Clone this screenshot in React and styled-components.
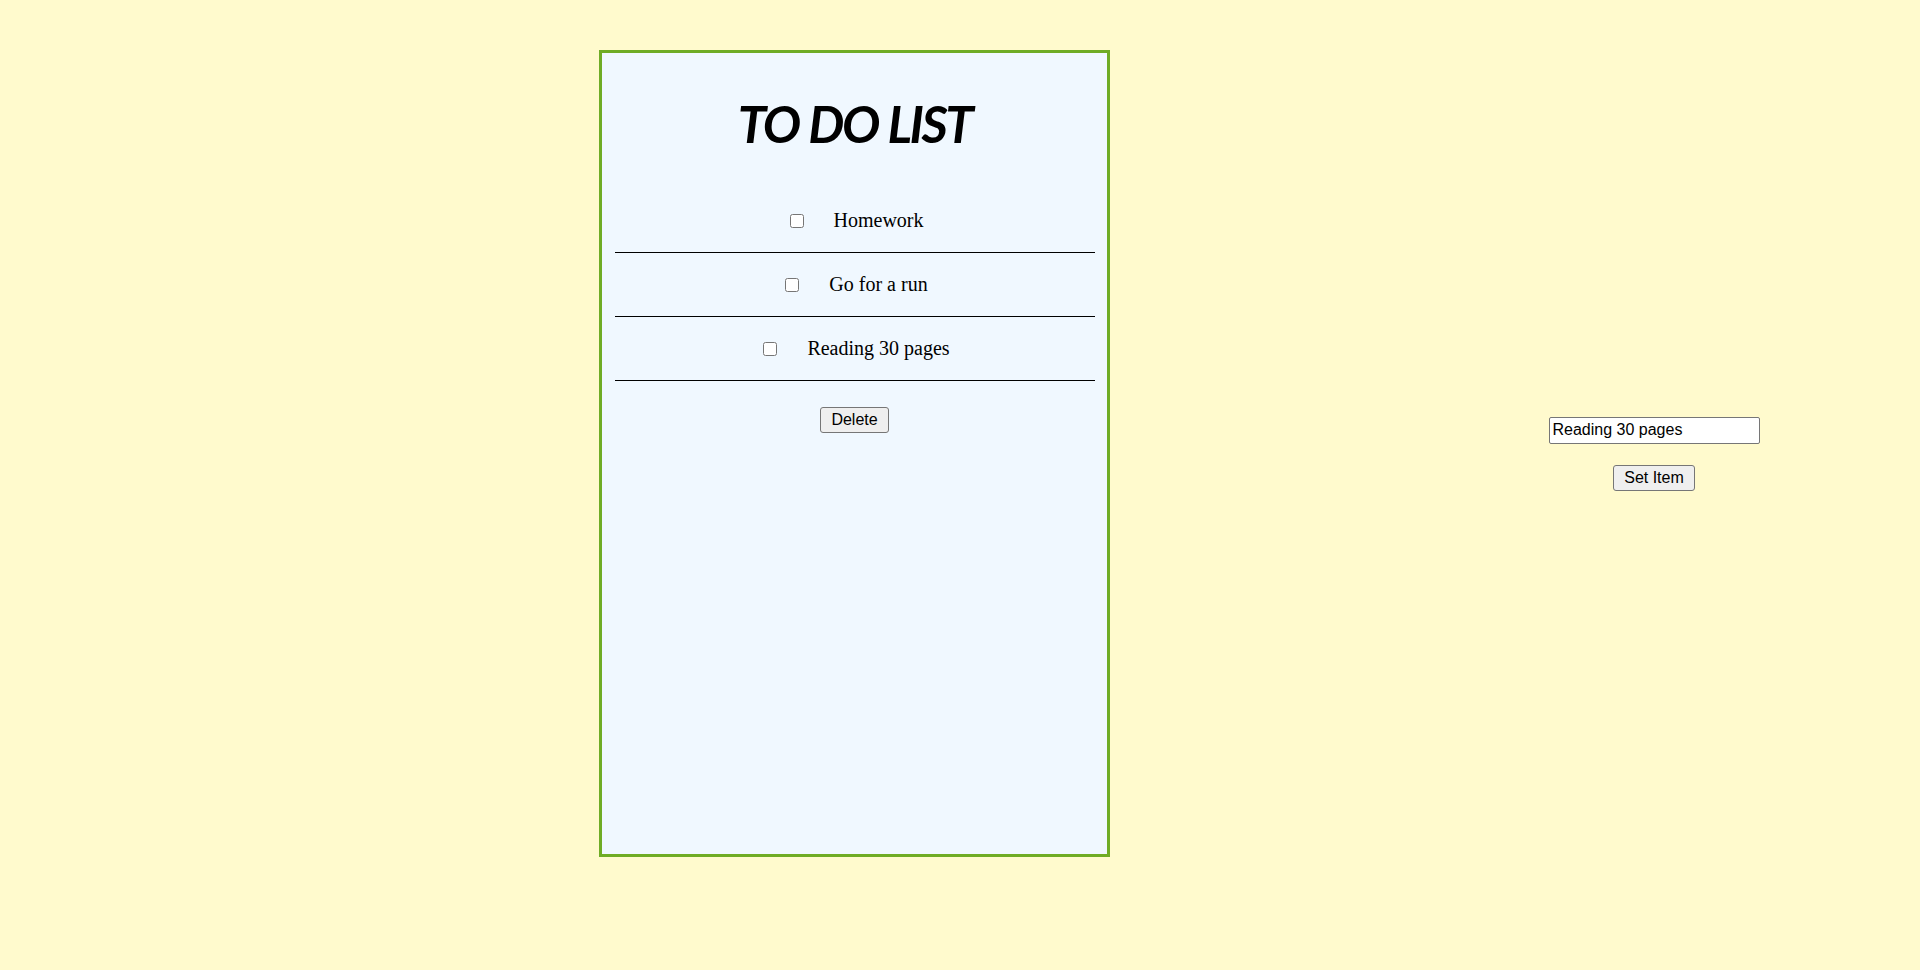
import React, { useState } from 'react';
import styled, { createGlobalStyle } from 'styled-components';

const GlobalStyle = createGlobalStyle`
  body {
    margin: 8px;
    background: #fffacd;
    font-family: "Liberation Serif", "Times New Roman", serif;
  }
`;

const Page = styled.div`
  display: flex;
  align-items: center;
  padding: 42px 0 0 591px;
`;

const Card = styled.div`
  box-sizing: border-box;
  width: 511px;
  height: 807px;
  border: 3px solid #6fac25;
  background: #f0f8ff;
  display: flex;
  flex-direction: column;
  align-items: center;
`;

const Title = styled.h1`
  margin: 39px 0 33px;
  font-family: Lato, "Open Sans", sans-serif;
  font-style: italic;
  font-weight: 700;
  font-size: 51px;
  line-height: 64px;
  letter-spacing: -2.5px;
  word-spacing: 1px;
  color: #000;
`;

const List = styled.ul`
  list-style: none;
  margin: 0;
  padding: 0;
  width: 480px;
`;

const Row = styled.li`
  display: flex;
  justify-content: center;
  align-items: center;
  gap: 27px;
  padding: 20px 0;
  line-height: 23px;
  font-size: 20px;
  border-bottom: 1px solid #000;
`;

const Check = styled.input`
  width: 14px;
  height: 14px;
  margin: 3px 3px 3px 4px;
`;

const Button = styled.button`
  font-family: "Liberation Sans", Arial, sans-serif;
  font-size: 16px;
  line-height: 18px;
  padding: 3px 10px;
  margin-top: ${(p) => p.$top || 0}px;
  border: 1px solid #767676;
  border-radius: 3px;
  background: #efefef;
  color: #000;
`;

const Form = styled.div`
  margin-left: 394px;
  width: 300px;
  display: flex;
  flex-direction: column;
  align-items: center;
`;

const TextInput = styled.input`
  box-sizing: border-box;
  width: 211px;
  height: 27px;
  padding: 3px 3px;
  border: 1px solid #767676;
  border-radius: 2px;
  font-family: "Liberation Sans", Arial, sans-serif;
  font-size: 16px;
  color: #000;
  background: #fff;
  margin-bottom: 21px;
`;

const todos = ['Homework', 'Go for a run', 'Reading 30 pages'];

export default function App() {
  const [text, setText] = useState('Reading 30 pages');
  return (
    <>
      <GlobalStyle />
      <Page>
        <Card>
          <Title>TO DO LIST</Title>
          <List>
            {todos.map((item) => (
              <Row key={item}>
                <Check type="checkbox" />
                <span>{item}</span>
              </Row>
            ))}
          </List>
          <Button $top={26}>Delete</Button>
        </Card>
        <Form>
          <TextInput value={text} onChange={(e) => setText(e.target.value)} />
          <Button>Set Item</Button>
        </Form>
      </Page>
    </>
  );
}
